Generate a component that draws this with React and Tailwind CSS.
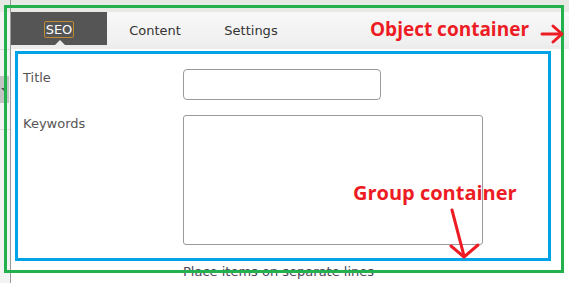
export default function App() {
  return (
    <div className="relative w-[569px] h-[283px] overflow-hidden bg-white font-['DejaVu_Sans',sans-serif]">
      <div className="flex h-full">
        {/* left strip */}
        <div className="w-[10px] flex flex-col bg-[#f2f4f4]">
          <div className="h-[12px] bg-[#e8e8e4]" />
          <div className="h-[38px] border-b border-[#dcdcdc]" />
          <div className="mt-[26px] h-[27px] w-[9px] bg-[#c4c4c4] flex items-center pl-[1px]">
            <div className="w-0 h-0 border-x-[3px] border-t-[3px] border-x-transparent border-t-[#555]" />
          </div>
          <div className="h-[27px] border-b border-[#dcdcdc]" />
        </div>
        <div className="w-px bg-[#9a9a9a]" />
        {/* main */}
        <div className="flex-1 flex flex-col">
          <div className="h-[12px] bg-[#e8e8e4]" />
          <div className="h-[33px] flex bg-gradient-to-b from-[#f8f8f8] to-[#efefef] text-[13px] leading-[16px] text-[#333]">
            <div className="relative w-[96px] bg-[#555555] flex items-center justify-center pt-[2px]">
              <span className="border border-[#c08a2e] rounded-[2px] px-px text-white leading-[15px]">SEO</span>
              <div className="absolute bottom-0 left-[44px] w-0 h-0 border-x-[5px] border-b-[5px] border-x-transparent border-b-[#ececec]" />
            </div>
            <div className="w-[96px] flex items-center justify-center pt-[4px]">Content</div>
            <div className="w-[96px] flex items-center justify-center pt-[4px]">Settings</div>
          </div>
          <div className="h-[4px] bg-[#ececec]" />
          <div className="flex-1 bg-white pt-[20px] pl-[12px]">
            <div className="grid grid-cols-[160px_auto] gap-y-[15px] text-[13px] leading-[16px] text-[#555]">
              <div className="pt-[1px]">Title</div>
              <div>
                <div className="w-[198px] h-[31px] border border-[#9a9a9a] rounded-[4px] bg-white" />
              </div>
              <div className="pt-[1px]">Keywords</div>
              <div>
                <textarea className="block w-[300px] h-[130px] border border-[#9a9a9a] rounded-[3px] bg-white resize-none" />
              </div>
            </div>
            <div className="ml-[160px] mt-[19px] text-[13px] leading-[16px] text-[#4a4458]">Place items on separate lines</div>
          </div>
        </div>
      </div>

      {/* annotations */}
      <div className="absolute left-[4px] top-[5px] w-[560px] h-[268px] border-[3px] border-[#22b14c] pointer-events-none" />
      <div className="absolute left-[15px] top-[51px] w-[536px] h-[210px] border-[3px] border-[#00a2e8] pointer-events-none" />
      <div className="absolute left-[370px] top-[20px] text-[19px] leading-[19px] font-bold font-['Open_Sans',sans-serif] text-[#ed1c24] whitespace-nowrap">Object container</div>
      <div className="absolute left-[353px] top-[183px] text-[20px] leading-[20px] font-bold font-['Open_Sans',sans-serif] text-[#ed1c24] whitespace-nowrap">Group container</div>
      <svg className="absolute left-0 top-0 pointer-events-none" width="569" height="283" viewBox="0 0 569 283">
        <g stroke="#ed1c24" strokeWidth="3" fill="none" strokeLinecap="round" strokeLinejoin="round">
          <path d="M542 34 L561 34" />
          <path d="M553 26 L562 34 L553 42" />
          <path d="M452 210 L464 256" />
          <path d="M451 246 L464 257 L478 245" />
        </g>
      </svg>
    </div>
  );
}
